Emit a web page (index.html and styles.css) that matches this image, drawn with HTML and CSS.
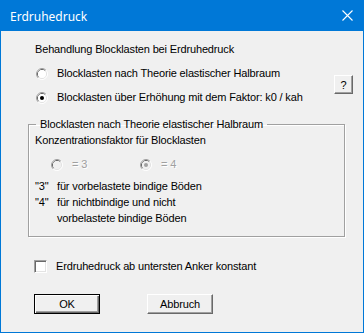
FILE: index.html
```html
<!DOCTYPE html>
<html lang="de">
<head>
    <meta charset="UTF-8">
    <meta name="viewport" content="width=device-width, initial-scale=1.0">
    <title>Erdruhedruck</title>
    <link rel="stylesheet" href="styles.css">
</head>
<body>
    <div class="window">
        <div class="titlebar">
            <span class="title">Erdruhedruck</span>
            <svg class="close" width="11" height="11" viewBox="0 0 11 11">
                <path d="M0.5 0.5 L10.5 10.5 M10.5 0.5 L0.5 10.5" stroke="#fff" stroke-width="1.1" fill="none"/>
            </svg>
        </div>

        <div class="dialog-body">
            <div class="row heading">Behandlung Blocklasten bei Erdruhedruck</div>

            <div class="options">
                <div class="option-list">
                    <label class="option">
                        <svg class="radio" width="12" height="12" viewBox="0 0 12 12">
                            <path d="M2.11 9.89 A5.5 5.5 0 0 1 9.89 2.11" stroke="#a0a0a0" fill="none"/>
                            <path d="M9.89 2.11 A5.5 5.5 0 0 1 2.11 9.89" stroke="#fff" fill="none"/>
                            <path d="M2.82 9.18 A4.5 4.5 0 0 1 9.18 2.82" stroke="#696969" fill="none"/>
                            <path d="M9.18 2.82 A4.5 4.5 0 0 1 2.82 9.18" stroke="#e3e3e3" fill="none"/>
                            <circle cx="6" cy="6" r="4" fill="#fff"/>
                        </svg>
                        <span>Blocklasten nach Theorie elastischer Halbraum</span>
                    </label>
                    <label class="option">
                        <svg class="radio" width="12" height="12" viewBox="0 0 12 12">
                            <path d="M2.11 9.89 A5.5 5.5 0 0 1 9.89 2.11" stroke="#a0a0a0" fill="none"/>
                            <path d="M9.89 2.11 A5.5 5.5 0 0 1 2.11 9.89" stroke="#fff" fill="none"/>
                            <path d="M2.82 9.18 A4.5 4.5 0 0 1 9.18 2.82" stroke="#696969" fill="none"/>
                            <path d="M9.18 2.82 A4.5 4.5 0 0 1 2.82 9.18" stroke="#e3e3e3" fill="none"/>
                            <circle cx="6" cy="6" r="4" fill="#fff"/>
                            <circle cx="6" cy="6" r="2" fill="#000"/>
                        </svg>
                        <span>Blocklasten über Erhöhung mit dem Faktor: k0 / kah</span>
                    </label>
                </div>
                <button type="button" class="btn help">?</button>
            </div>

            <fieldset class="group">
                <legend>Blocklasten nach Theorie elastischer Halbraum</legend>
                <div class="group-label">Konzentrationsfaktor für Blocklasten</div>

                <div class="factors">
                    <label class="factor disabled">
                        <svg class="radio" width="12" height="12" viewBox="0 0 12 12">
                            <path d="M2.11 9.89 A5.5 5.5 0 0 1 9.89 2.11" stroke="#a0a0a0" fill="none"/>
                            <path d="M9.89 2.11 A5.5 5.5 0 0 1 2.11 9.89" stroke="#fff" fill="none"/>
                            <path d="M2.82 9.18 A4.5 4.5 0 0 1 9.18 2.82" stroke="#696969" fill="none"/>
                            <path d="M9.18 2.82 A4.5 4.5 0 0 1 2.82 9.18" stroke="#e3e3e3" fill="none"/>
                            <circle cx="6" cy="6" r="4" fill="#f0f0f0"/>
                        </svg>
                        <span>= 3</span>
                    </label>
                    <label class="factor disabled">
                        <svg class="radio" width="12" height="12" viewBox="0 0 12 12">
                            <path d="M2.11 9.89 A5.5 5.5 0 0 1 9.89 2.11" stroke="#a0a0a0" fill="none"/>
                            <path d="M9.89 2.11 A5.5 5.5 0 0 1 2.11 9.89" stroke="#fff" fill="none"/>
                            <path d="M2.82 9.18 A4.5 4.5 0 0 1 9.18 2.82" stroke="#696969" fill="none"/>
                            <path d="M9.18 2.82 A4.5 4.5 0 0 1 2.82 9.18" stroke="#e3e3e3" fill="none"/>
                            <circle cx="6" cy="6" r="4" fill="#f0f0f0"/>
                            <circle cx="6" cy="6" r="2" fill="#a0a0a0"/>
                        </svg>
                        <span>= 4</span>
                    </label>
                </div>

                <div class="notes">
                    <span>"3"</span><span>für vorbelastete bindige Böden</span>
                    <span>"4"</span><span>für nichtbindige und nicht<br>vorbelastete bindige Böden</span>
                </div>
            </fieldset>

            <label class="row check-row">
                <span class="checkbox"></span>
                <span>Erdruhedruck ab untersten Anker konstant</span>
            </label>

            <div class="row buttons">
                <button type="button" class="btn default">OK</button>
                <button type="button" class="btn">Abbruch</button>
            </div>
        </div>
    </div>
</body>
</html>
```

FILE: styles.css
```css
body {
    margin: 0;
    background-color: #f0f0f0;
}
.window {
    width: 364px;
    height: 333px;
    box-sizing: border-box;
    border: 1px solid #0078d7;
    border-top: none;
    background-color: #f0f0f0;
    font-family: "Liberation Sans", Arial, sans-serif;
    font-size: 11px;
    letter-spacing: -0.15px;
    color: #000;
}
.titlebar {
    height: 31px;
    margin: 0 -1px;
    padding: 0 11px 0 10px;
    background-color: #0078d7;
    display: flex;
    align-items: center;
    justify-content: space-between;
}
.title {
    font-family: "Noto Sans", sans-serif;
    font-size: 12px;
    letter-spacing: 0;
    color: #fff;
    margin-top: 1px;
}
.close {
    display: block;
}

.dialog-body {
    padding: 12px 10px 0 27px;
}
.row {
    padding-left: 7px;
    line-height: 13px;
}
.heading {
    height: 13px;
}

/* radio options */
.options {
    margin-top: 11px;
    display: flex;
    justify-content: space-between;
    align-items: flex-start;
}
.option-list {
    padding-left: 8px;
    display: flex;
    flex-direction: column;
    gap: 11px;
}
.option,
.factor {
    display: flex;
    align-items: center;
    height: 13px;
    line-height: 13px;
}
.radio {
    display: block;
    flex: none;
    margin-right: 9px;
}

/* classic buttons */
.btn {
    box-sizing: border-box;
    width: 66px;
    height: 20px;
    padding: 0;
    font-family: inherit;
    font-size: 11px;
    letter-spacing: -0.15px;
    color: #000;
    background-color: #f0f0f0;
    border: 1px solid;
    border-color: #fff #696969 #696969 #fff;
    box-shadow: inset -1px -1px 0 #a0a0a0;
}
.btn.default {
    border-color: #000;
    box-shadow: inset 1px 1px 0 #fff, inset -1px -1px 0 #696969, inset -2px -2px 0 #a0a0a0;
}
.help {
    width: 19px;
    height: 19px;
    margin-top: 8px;
}

/* group box */
.group {
    box-sizing: border-box;
    width: 317px;
    margin: 14px 0 0 0;
    padding: 3px 6px 10px 6px;
    border: 1px solid #a0a0a0;
    box-shadow: inset 1px 1px 0 #fff, 1px 1px 0 #fff;
    min-inline-size: 0;
}
.group legend {
    margin-left: 1px;
    padding: 0 4px;
    line-height: 13px;
}
.group-label {
    line-height: 13px;
}
.factors {
    margin-top: 11px;
    padding-left: 16px;
    display: flex;
}
.factor {
    width: 89px;
}
.disabled {
    color: #a0a0a0;
    text-shadow: 1px 1px 0 #fff;
}
.notes {
    margin-top: 7px;
    display: grid;
    grid-template-columns: 22px auto;
    line-height: 16px;
}

/* checkbox */
.check-row {
    margin-top: 23px;
    padding-left: 6px;
    display: flex;
    align-items: center;
    height: 13px;
}
.checkbox {
    box-sizing: border-box;
    width: 13px;
    height: 13px;
    margin-right: 9px;
    border: 1px solid;
    border-color: #a0a0a0 #fff #fff #a0a0a0;
    box-shadow: inset 1px 1px 0 #696969, inset -1px -1px 0 #e3e3e3;
    background-color: #fff;
}

.buttons {
    margin-top: 21px;
    padding-left: 6px;
    display: flex;
    gap: 47px;
}
```
